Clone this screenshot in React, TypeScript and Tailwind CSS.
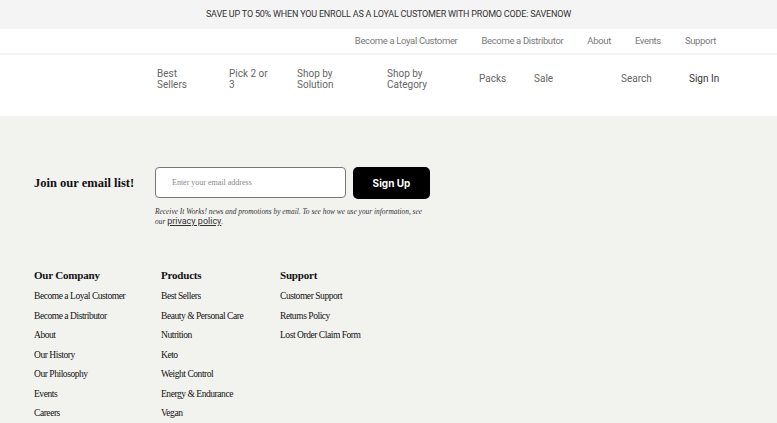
const company = [
	"Become a Loyal Customer",
	"Become a Distributor",
	"About",
	"Our History",
	"Our Philosophy",
	"Events",
	"Careers",
];
const products = [
	"Best Sellers",
	"Beauty & Personal Care",
	"Nutrition",
	"Keto",
	"Weight Control",
	"Energy & Endurance",
	"Vegan",
];
const support = ["Customer Support", "Returns Policy", "Lost Order Claim Form"];

function FooterColumn({ title, links, width }: { title: string; links: string[]; width: string }) {
	return (
		<div className={width}>
			<h3 className="text-[11px] tracking-[-0.2px] font-bold text-[#111] leading-[14px]">{title}</h3>
			<ul className="mt-[5px] flex flex-col">
				{links.map((l) => (
					<li key={l} className="text-[9.5px] tracking-[-0.45px] leading-[19.5px] text-[#111]">
						{l}
					</li>
				))}
			</ul>
		</div>
	);
}

export default function App() {
	return (
		<div className="min-h-[423px] bg-[#f2f2ef] font-['Liberation_Serif',serif]">
			<div className="h-[29px] bg-[#f4f4f4] flex items-center justify-center">
				<p className="font-['Roboto',sans-serif] text-[9px] tracking-[-0.2px] text-[#333] uppercase">
					Save up to 50% when you enroll as a loyal customer with promo code: SAVENOW
				</p>
			</div>
			<div className="h-[26px] bg-white border-b-2 border-[#f2f2f2] flex items-center justify-end pr-[61px] gap-[24px] font-['Roboto',sans-serif] text-[9.5px] tracking-[-0.35px] text-[#7a7a7a]">
				<span>Become a Loyal Customer</span>
				<span>Become a Distributor</span>
				<span>About</span>
				<span>Events</span>
				<span>Support</span>
			</div>
			<nav className="h-[61px] bg-white flex items-center pb-[14px] pl-[157px] font-['Roboto',sans-serif] text-[10px] leading-[11px] text-[#666]">
				<span className="w-[72px]">Best<br />Sellers</span>
				<span className="w-[68px]">Pick 2 or<br />3</span>
				<span className="w-[90px]">Shop by<br />Solution</span>
				<span className="w-[92px]">Shop by<br />Category</span>
				<span className="w-[55px]">Packs</span>
				<span className="w-[87px]">Sale</span>
				<span className="w-[68px]">Search</span>
				<span className="text-[#333]">Sign In</span>
			</nav>
			<section className="pt-[51px] pl-[34px]">
				<div className="flex items-start">
					<h2 className="w-[121px] mt-[7px] text-[12.5px] font-bold text-[#111]">Join our email list!</h2>
					<div className="w-[276px]">
						<div className="flex gap-[7px]">
							<div className="w-[191px] h-[31px] bg-white border border-[#777] rounded-[4px] flex items-center pl-[16px]">
								<span className="text-[8px] text-[#888]">Enter your email address</span>
							</div>
							<button className="w-[77px] h-[32px] bg-black rounded-[5px] text-white text-[10px] font-bold font-['Inter',sans-serif]">
								Sign Up
							</button>
						</div>
						<p className="mt-[8px] max-w-[270px] text-[7.4px] leading-[10px] italic text-[#333]">
							Receive It Works! news and promotions by email. To see how we use your information, see our{" "}
							<span className="underline font-['Roboto',sans-serif] text-[9px] leading-none not-italic">privacy policy</span>.
						</p>
					</div>
				</div>
				<div className="mt-[41px] flex">
					<FooterColumn title="Our Company" links={company} width="w-[127px]" />
					<FooterColumn title="Products" links={products} width="w-[119px]" />
					<FooterColumn title="Support" links={support} width="w-[120px]" />
				</div>
			</section>
		</div>
	);
}
